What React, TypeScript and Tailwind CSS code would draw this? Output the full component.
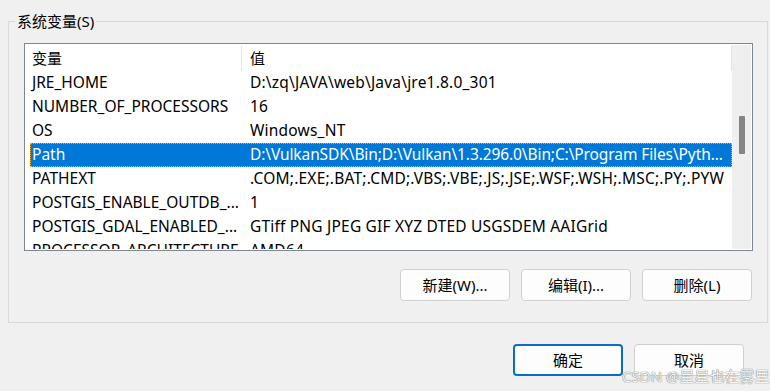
const rows = [
  { name: 'JRE_HOME', value: 'D:\\zq\\JAVA\\web\\Java\\jre1.8.0_301' },
  { name: 'NUMBER_OF_PROCESSORS', value: '16' },
  { name: 'OS', value: 'Windows_NT' },
  {
    name: 'Path',
    value: 'D:\\VulkanSDK\\Bin;D:\\Vulkan\\1.3.296.0\\Bin;C:\\Program Files\\Pyth...',
    selected: true,
  },
  { name: 'PATHEXT', value: '.COM;.EXE;.BAT;.CMD;.VBS;.VBE;.JS;.JSE;.WSF;.WSH;.MSC;.PY;.PYW' },
  { name: 'POSTGIS_ENABLE_OUTDB_...', value: '1' },
  { name: 'POSTGIS_GDAL_ENABLED_...', value: 'GTiff PNG JPEG GIF XYZ DTED USGSDEM AAIGrid' },
  { name: 'PROCESSOR_ARCHITECTURE', value: 'AMD64' },
];

const font = { fontFamily: '"Noto Sans", "Noto Sans CJK SC", sans-serif' };

const WinButton = ({ label, primary }: { label: string; primary?: boolean }) => (
  <button
    className={
      'h-8 w-[110px] rounded-[4px] bg-[#fdfdfd] text-[15px] text-black ' +
      (primary ? 'border-2 border-[#0a6cc4]' : 'border border-[#d0d0d0]')
    }
  >
    {label}
  </button>
);

const App = () => {
  return (
    <div
      className="relative h-[391px] w-[770px] overflow-hidden bg-[#f0f0f0] text-[15px] text-black"
      style={font}
    >
      <div className="pt-[21px] pl-[8px]">
        {/* System variables group */}
        <div className="relative h-[302px] w-[760px] border border-[#d9d9d9] pt-[21px] pl-[15px]">
          <span className="absolute top-[-11px] left-[6px] bg-[#f0f0f0] px-[2px] leading-[20px]">
            系统变量(S)
          </span>

          {/* List view */}
          <div className="flex h-[208px] w-[729px] border border-[#7f8792] bg-white p-px">
            <div className="flex-1 overflow-hidden pl-[4px] text-[15.5px]">
              <div className="flex h-[26px] items-center text-[15px]">
                <div className="flex h-[25px] w-[212px] items-center border-r border-[#e5e5e5] pl-[2px]">
                  变量
                </div>
                <div className="flex h-[25px] flex-1 items-center border-r border-[#e5e5e5] pl-[8px]">
                  值
                </div>
              </div>
              {rows.map((r) => (
                <div
                  key={r.name}
                  className={
                    'flex h-6 items-center whitespace-nowrap ' +
                    (r.selected
                      ? 'border border-dotted border-[#f5a623] bg-[#0078d7] text-white'
                      : 'border border-transparent')
                  }
                >
                  <div className="w-[211px] pl-[1px]">{r.name}</div>
                  <div
                    className={
                      'flex-1 overflow-hidden pl-[8px] ' +
                      (r.selected ? 'tracking-[-0.1px]' : 'tracking-[0.2px]')
                    }
                  >
                    {r.value}
                  </div>
                </div>
              ))}
            </div>

            {/* Scrollbar */}
            <div className="w-[19px] bg-[#efefef] pt-[71px] pl-[7px]">
              <div className="h-[38px] w-[6px] rounded-[1px] bg-[#858585]" />
            </div>
          </div>

          <div className="mt-[18px] flex w-[728px] justify-end gap-[11px]">
            <WinButton label="新建(W)..." />
            <WinButton label="编辑(I)..." />
            <WinButton label="删除(L)" />
          </div>
        </div>
      </div>

      <div className="mt-[21px] flex w-[744px] justify-end gap-[11px]">
        <WinButton label="确定" primary />
        <WinButton label="取消" />
      </div>

      {/* Watermark */}
      <span className="absolute top-[365px] left-[622px] text-[15px] text-[#f4f4f4] [text-shadow:0_0_1px_#777,0_0_1px_#777]">
        CSDN @星星也在雾里
      </span>
    </div>
  );
};

export default App;
